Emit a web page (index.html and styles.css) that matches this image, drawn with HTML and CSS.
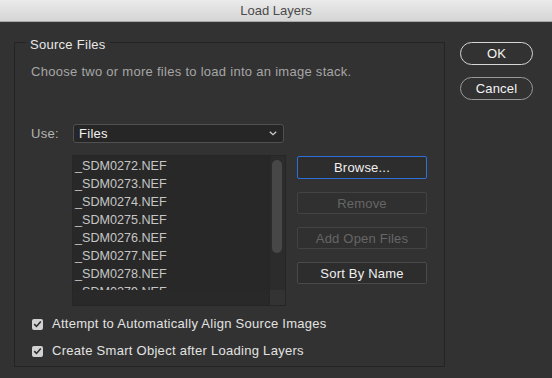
FILE: index.html
```html
<!DOCTYPE html>
<html lang="en">
<head>
  <meta charset="UTF-8" />
  <title>Load Layers</title>
  <link rel="stylesheet" href="styles.css">
</head>
<body>
  <div class="titlebar">Load Layers</div>

  <div class="dialog">
    <fieldset class="group">
      <legend>Source Files</legend>
      <p class="hint">Choose two or more files to load into an image stack.</p>

      <div class="use-row">
        <span class="use-label">Use:</span>
        <div class="select">
          <span>Files</span>
          <svg class="chevron" width="8" height="5" viewBox="0 0 8 5"><path d="M0.8 0.8 L4 3.8 L7.2 0.8" fill="none" stroke="#d0d0d0" stroke-width="1.2"/></svg>
        </div>
      </div>

      <div class="files-row">
        <div class="file-list">
          <ul class="files">
            <li>_SDM0272.NEF</li>
            <li>_SDM0273.NEF</li>
            <li>_SDM0274.NEF</li>
            <li>_SDM0275.NEF</li>
            <li>_SDM0276.NEF</li>
            <li>_SDM0277.NEF</li>
            <li>_SDM0278.NEF</li>
            <li>_SDM0279.NEF</li>
          </ul>
          <div class="vscroll"><div class="thumb"></div></div>
          <div class="hscroll"></div>
          <div class="corner"></div>
        </div>

        <div class="file-actions">
          <button class="btn focused">Browse...</button>
          <button class="btn" disabled>Remove</button>
          <button class="btn" disabled>Add Open Files</button>
          <button class="btn">Sort By Name</button>
        </div>
      </div>

      <label class="check first"><span class="box"><svg width="9" height="8" viewBox="0 0 9 8"><path d="M1.2 4.2 L3.5 6.4 L7.8 1.4" fill="none" stroke="#2e2e2e" stroke-width="1.6"/></svg></span>Attempt to Automatically Align Source Images</label>
      <label class="check"><span class="box"><svg width="9" height="8" viewBox="0 0 9 8"><path d="M1.2 4.2 L3.5 6.4 L7.8 1.4" fill="none" stroke="#2e2e2e" stroke-width="1.6"/></svg></span>Create Smart Object after Loading Layers</label>
    </fieldset>

    <div class="dialog-actions">
      <button class="pill primary">OK</button>
      <button class="pill">Cancel</button>
    </div>
  </div>
</body>
</html>
```

FILE: styles.css
```css
* {
  box-sizing: border-box;
}

body {
  margin: 0;
  width: 552px;
  height: 378px;
  overflow: hidden;
  background: #323232;
  font-family: "Liberation Sans", Arial, sans-serif;
  font-size: 13px;
  letter-spacing: 0.28px;
  color: #e2e2e2;
}

.titlebar {
  height: 22px;
  line-height: 21px;
  text-align: center;
  color: #4a4a4a;
  font-size: 13px;
  letter-spacing: 0;
  background: linear-gradient(#ebebeb, #d5d5d5);
  border-bottom: 1px solid #a9a9a9;
}

.dialog {
  display: flex;
  gap: 15px;
  padding: 9px 0 0 14px;
}

.group {
  width: 431px;
  margin: 0;
  padding: 0 0 7px 16px;
  border: 1px solid #242424;
  min-width: 0;
}

.group legend {
  margin-left: -5px;
  padding: 6px 4px 0;
  line-height: 16px;
  color: #e8e8e8;
}

.hint {
  margin: 11px 0 0;
  line-height: 16px;
  color: #a6a6a6;
}

.use-row {
  display: flex;
  align-items: center;
  margin-top: 44px;
}

.use-label {
  width: 42px;
  color: #b4b4b4;
}

.select {
  width: 211px;
  height: 19px;
  display: flex;
  align-items: center;
  justify-content: space-between;
  padding: 0 6px 0 5px;
  background: #262626;
  border: 1px solid #505050;
  border-radius: 3px;
  color: #f2f2f2;
}

.files-row {
  display: flex;
  margin-top: 12px;
}

.file-list {
  width: 214px;
  height: 151px;
  margin-left: 41px;
  display: grid;
  grid-template-columns: 1fr 16px;
  grid-template-rows: 1fr 15px;
  background: #282828;
  border: 1px solid #262626;
}

.files {
  list-style: none;
  margin: 0;
  padding: 1px 0 0 2px;
  overflow: hidden;
  font-size: 12.6px;
  letter-spacing: 0;
  color: #c6c6c6;
}

.files li {
  line-height: 18px;
}

.vscroll {
  background: #2c2c2c;
  border-left: 1px solid #262626;
  padding: 4px 3px 0 2px;
}

.thumb {
  height: 93px;
  border-radius: 6px;
  background: #474747;
}

.hscroll {
  background: #292929;
}

.corner {
  background: #333333;
  border-left: 1px solid #262626;
}

.file-actions {
  display: flex;
  flex-direction: column;
  gap: 13px;
  margin-left: 11px;
  padding-top: 1px;
}

.btn {
  width: 130px;
  height: 22px;
  padding: 0;
  font-family: inherit;
  font-size: 13px;
  letter-spacing: 0.2px;
  color: #f0f0f0;
  background: #2d2d2d;
  border: 1px solid #4a4a4a;
  border-radius: 2px;
}

.btn.focused {
  height: 23px;
  border-color: #2c6fd9;
}

.btn:disabled {
  color: #666666;
  background: #303030;
  border-color: #434343;
}

.check {
  display: flex;
  align-items: center;
  line-height: 16px;
  margin-top: 11px;
  color: #e2e2e2;
}

.check.first {
  margin-top: 10px;
}

.box {
  width: 11px;
  height: 11px;
  margin: 0 9px 0 1px;
  display: flex;
  align-items: center;
  justify-content: center;
  background: #d2d2d2;
  border-radius: 2px;
}

.dialog-actions {
  display: flex;
  flex-direction: column;
  gap: 12px;
  margin-top: 11px;
}

.pill {
  width: 73px;
  height: 23px;
  padding: 0;
  font-family: inherit;
  font-size: 13px;
  letter-spacing: 0.2px;
  color: #f4f4f4;
  background: #323232;
  border: 1px solid #9a9a9a;
  border-radius: 12px;
}

.pill.primary {
  border-color: #d6d6d6;
}
```
